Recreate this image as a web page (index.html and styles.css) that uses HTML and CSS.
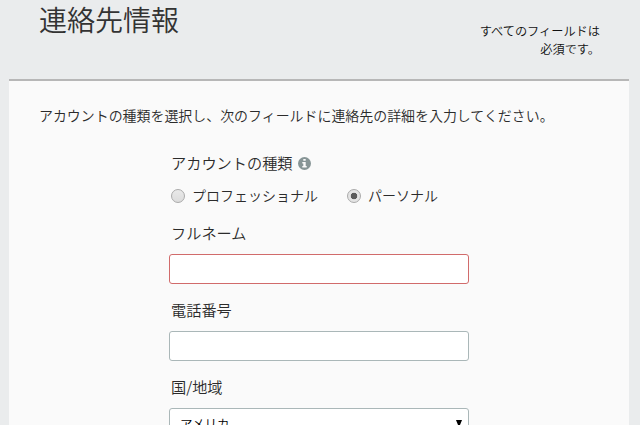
FILE: index.html
```html
<!DOCTYPE html>
<html lang="ja">
<head>
  <meta charset="UTF-8">
  <meta name="viewport" content="width=device-width, initial-scale=1.0">
  <title>連絡先情報</title>
  <link rel="stylesheet" href="styles.css">
</head>
<body>
  <div class="container">
    <div class="header">
      <h1>連絡先情報</h1>
      <p class="required-note">すべてのフィールドは<br>必須です。</p>
    </div>
    <div class="content">
      <p class="intro">アカウントの種類を選択し、次のフィールドに連絡先の詳細を入力してください。</p>
      <form class="contact-form">
        <div class="label account-label">
          <span>アカウントの種類</span>
          <svg class="info-icon" viewBox="0 0 13 13" width="13" height="13">
            <circle cx="6.5" cy="6.5" r="6.5" fill="#879596"/>
            <path d="M5.3 2h2.4v1.8H5.3zM4.3 5h3.4v4h1v1.5H4.3V9h1V6.5h-1z" fill="#fafafa"/>
          </svg>
        </div>
        <div class="radio-group">
          <label class="radio"><input type="radio" name="account-type"><span>プロフェッショナル</span></label>
          <label class="radio"><input type="radio" name="account-type" checked><span>パーソナル</span></label>
        </div>
        <label class="label" for="full-name">フルネーム</label>
        <input class="field error" type="text" id="full-name">
        <label class="label" for="phone">電話番号</label>
        <input class="field" type="text" id="phone">
        <label class="label" for="country">国/地域</label>
        <div class="select-wrap">
          <select class="field" id="country">
            <option>アメリカ</option>
          </select>
          <svg class="arrow" viewBox="0 0 6 6" width="6" height="6"><path d="M0 0h6L3.6 6H2.4z"/></svg>
        </div>
      </form>
    </div>
  </div>
</body>
</html>
```

FILE: styles.css
```css
* {
  box-sizing: border-box;
}
html {
  overflow: hidden;
}
body {
  margin: 0;
  height: 425px;
  overflow: hidden;
  background-color: #eaeced;
  color: #2b2b2b;
  font-family: "Noto Sans CJK JP", sans-serif;
  font-weight: 350;
  font-size: 14px;
}
h1, p {
  margin: 0;
}
.container {
  width: 620px;
  height: 425px;
  margin: 0 11px 0 9px;
  overflow: hidden;
}
.header {
  display: flex;
  justify-content: space-between;
  height: 81px;
  padding: 0 29px 0 30px;
  border-bottom: 2px solid #b7b7b7;
}
h1 {
  color: #333;
  font-size: 28px;
  font-weight: 350;
  line-height: 38px;
}
.required-note {
  padding-top: 22px;
  font-size: 12.2px;
  line-height: 18px;
  text-align: right;
  color: #111;
}
.content {
  height: 344px;
  padding: 24px 30px 0;
  background-color: #fafafa;
  overflow: hidden;
}
.intro {
  font-size: 13.95px;
  line-height: 20px;
}
.contact-form {
  width: 300px;
  margin: 25px 0 0 130px;
}
.label {
  display: block;
  height: 24px;
  padding-left: 2px;
  font-size: 15.2px;
  line-height: 24px;
}
.account-label {
  display: flex;
  align-items: center;
  gap: 5px;
}
.info-icon {
  margin-top: 3px;
}
.radio-group {
  display: flex;
  gap: 29px;
  height: 46px;
  padding: 11px 0 0 2px;
}
.radio {
  display: flex;
  align-items: center;
  gap: 7px;
  height: 22px;
  white-space: nowrap;
}
.radio span {
  padding-bottom: 2px;
}
.radio input {
  appearance: none;
  flex: none;
  width: 14px;
  height: 14px;
  margin: 0;
  border: 1px solid #aaa;
  border-radius: 50%;
  background: linear-gradient(#e9e9e9, #dcdcdc);
}
.radio input:checked {
  background: radial-gradient(circle, #5b5b5b 3px, #e4e4e4 3.6px);
}
.field {
  display: block;
  width: 300px;
  height: 30px;
  margin: 10px 0 13px;
  padding: 0 10px;
  border: 1px solid #aab7b8;
  border-radius: 3px;
  background-color: #fff;
  color: #000;
  font: inherit;
  font-size: 12.5px;
}
.field.error {
  border-color: #d16b6b;
}
select.field {
  appearance: none;
}
.select-wrap {
  position: relative;
}
.arrow {
  position: absolute;
  top: 12px;
  right: 7px;
}
```
